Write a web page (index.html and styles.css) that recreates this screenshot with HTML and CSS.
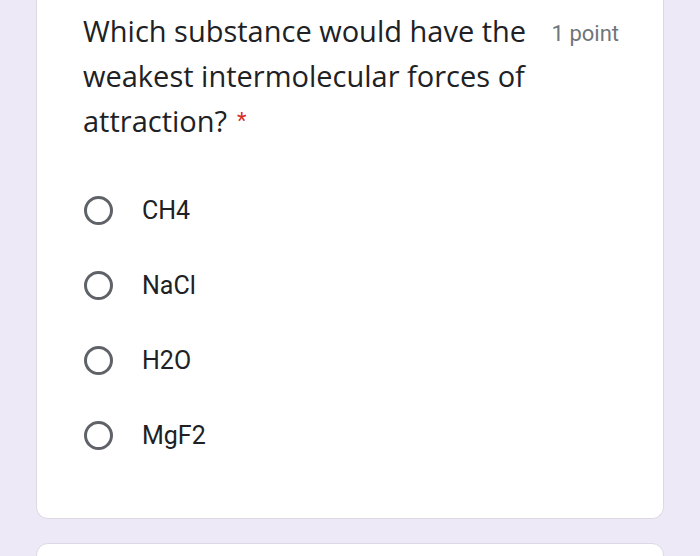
FILE: index.html
```html
<!DOCTYPE html>
<html>
<head>
<meta charset="utf-8">
<link rel="stylesheet" href="styles.css">
</head>
<body>
<div class="page">
  <div class="card">
    <div class="head">
      <div class="question"><span class="qtext">Which substance would have the weakest intermolecular forces of attraction?</span><span class="req">*</span></div>
      <div class="points">1 point</div>
    </div>
    <div class="options">
      <div class="option"><span class="radio"></span><span class="label">CH4</span></div>
      <div class="option"><span class="radio"></span><span class="label">NaCl</span></div>
      <div class="option"><span class="radio"></span><span class="label">H2O</span></div>
      <div class="option"><span class="radio"></span><span class="label">MgF2</span></div>
    </div>
  </div>
  <div class="card next"></div>
</div>
</body>
</html>
```
FILE: styles.css
```css
html, body {
  margin: 0;
  padding: 0;
  background: #ede9f7;
}
.page {
  display: flex;
  flex-direction: column;
  gap: 24px;
  padding: 0 36px;
}
.card {
  background: #fff;
  border: 1px solid #dcd9e4;
  border-top: 0;
  border-radius: 0 0 12px 12px;
  padding: 8px 44px 0 46px;
  height: 519px;
  box-sizing: border-box;
}
.card.next {
  border-top: 1px solid #dcd9e4;
  border-radius: 12px 12px 0 0;
  height: 40px;
}
.head {
  display: flex;
  justify-content: space-between;
  align-items: flex-start;
}
.question {
  font-family: "Open Sans", sans-serif;
  font-size: 29px;
  line-height: 45px;
  color: #202124;
  width: 456px;
  letter-spacing: 0;
}
.req {
  display: inline-block;
  color: #d93025;
  font-family: Roboto, sans-serif;
  font-size: 22px;
  line-height: 22px;
  vertical-align: 4px;
  margin-left: 10px;
}
.points {
  font-family: Roboto, sans-serif;
  font-size: 22px;
  color: #70757a;
  line-height: 45px;
  padding-top: 3px;
}
.options {
  display: flex;
  flex-direction: column;
  gap: 46px;
  margin-top: 53px;
}
.option {
  display: flex;
  align-items: center;
  gap: 29px;
  height: 29px;
}
.radio {
  width: 29px;
  height: 29px;
  box-sizing: border-box;
  border: 3px solid #5f6368;
  border-radius: 50%;
  margin-left: 1px;
}
.label {
  font-family: Roboto, sans-serif;
  font-size: 25px;
  color: #202124;
}
```
